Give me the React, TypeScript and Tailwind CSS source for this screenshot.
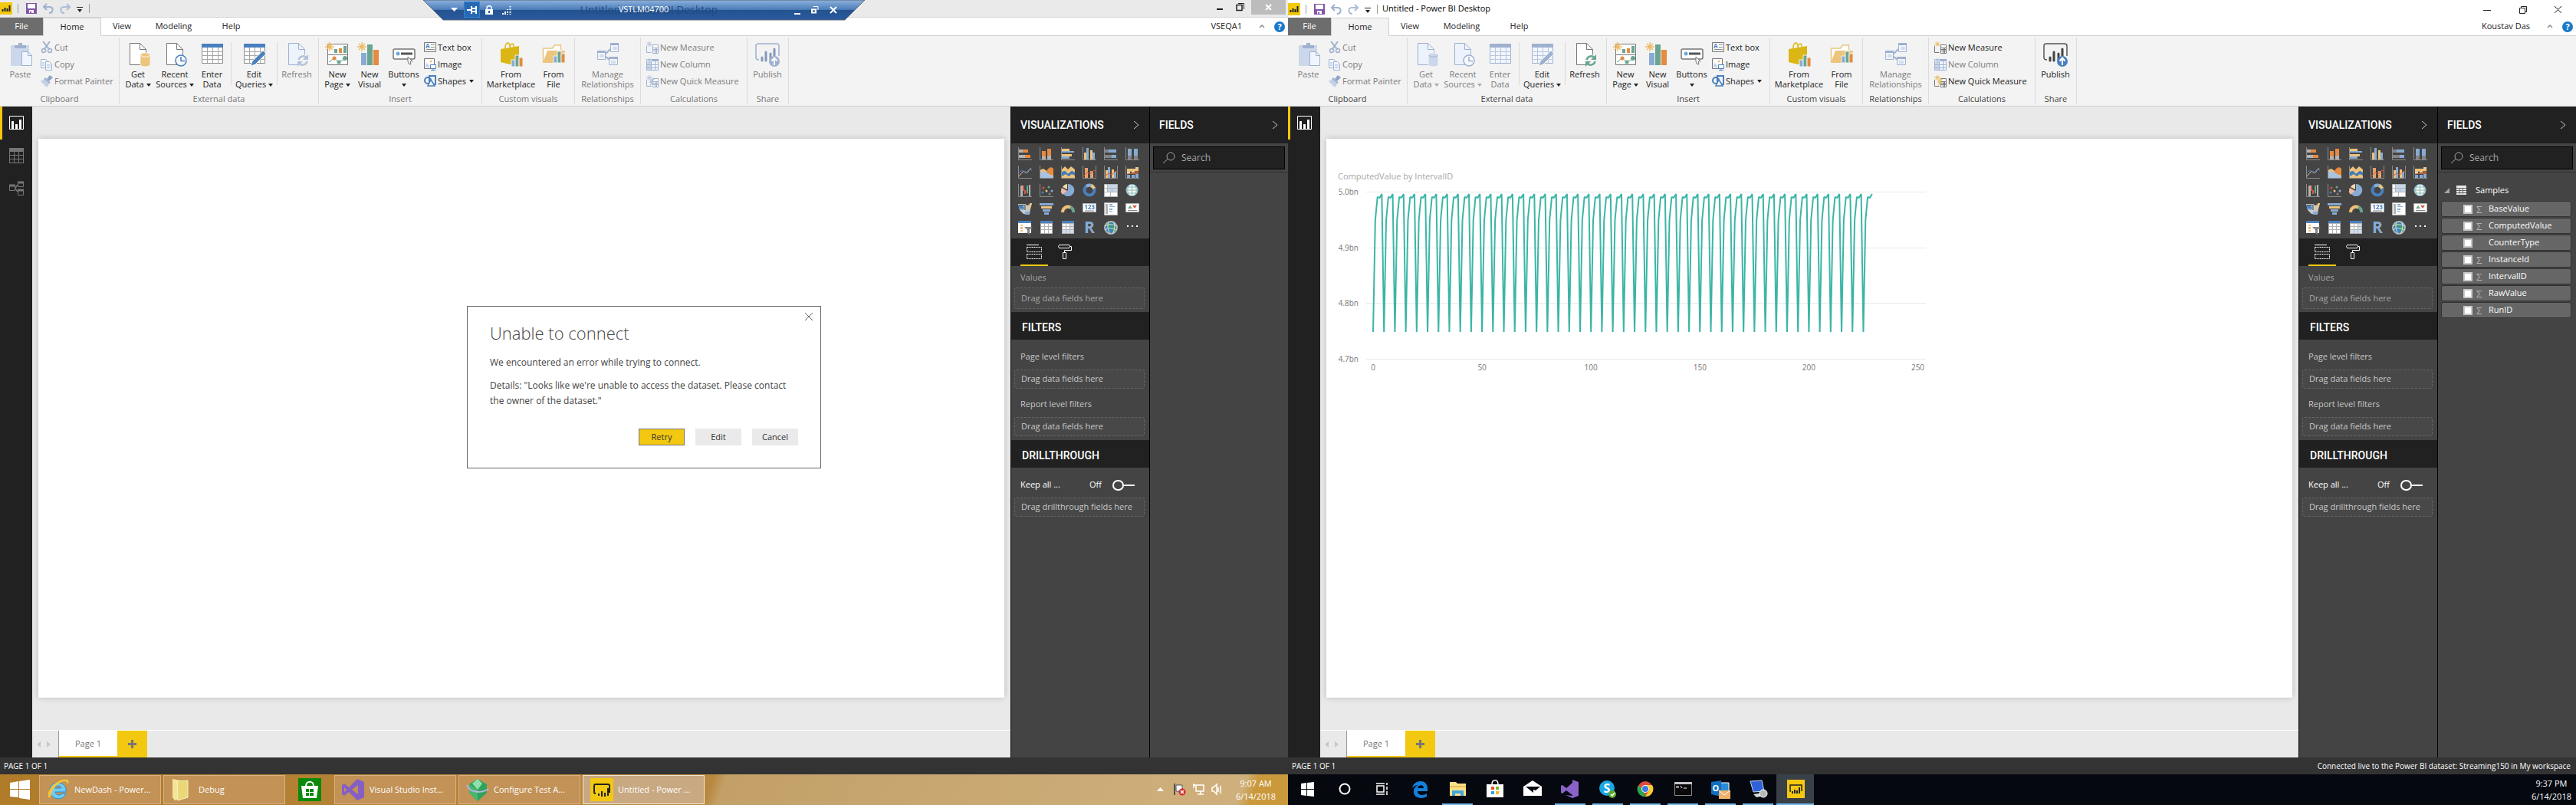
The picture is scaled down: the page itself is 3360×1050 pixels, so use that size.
import type { ReactNode } from "react";

type Tint = { dim?: boolean };

const vizIcons: { name: string; art: ReactNode }[] = [
  {
    name: "Stacked bar chart",
    art: (
      <>
        <path d="M.5 0v16.500h17.500" stroke="#8a8a8a" fill="none" />
        <path d="M1 3h5v4H1zM1 10h8v4H1z" fill="#b3b3b3" />
        <path d="M6 3h7v4H6zM9 10h7v4H9z" fill="#e58a3f" />
      </>
    ),
  },
  {
    name: "Stacked column chart",
    art: (
      <>
        <path d="M.5 0v16.500h17.500" stroke="#8a8a8a" fill="none" />
        <path d="M3 5h5v7H3zM10 2h5v9h-5z" fill="#e58a3f" />
        <path d="M3 12h5v4H3zM10 11h5v5h-5z" fill="#b3b3b3" />
      </>
    ),
  },
  {
    name: "Clustered bar chart",
    art: (
      <>
        <path d="M.5 0v16.500h17.500" stroke="#8a8a8a" fill="none" />
        <path d="M1 2h10v3H1zM1 9h13v3H1z" fill="#edc37b" />
        <path d="M1 5h16v2H1zM1 12h10v3H1z" fill="#88abd4" />
      </>
    ),
  },
  {
    name: "Clustered column chart",
    art: (
      <>
        <path d="M.5 0v16.500h17.500" stroke="#8a8a8a" fill="none" />
        <path d="M2 7h3v9H2zM10 4h3v12h-3z" fill="#edc37b" />
        <path d="M5 1h3v15H5zM13 7h3v9h-3z" fill="#88abd4" />
      </>
    ),
  },
  {
    name: "100% stacked bar chart",
    art: (
      <>
        <path d="M.5 0v16.500h17.500" stroke="#8a8a8a" fill="none" />
        <path d="M1 3h5v4H1zM1 10h9v4H1z" fill="#858585" />
        <path d="M6 3h10v4H6zM10 10h6v4h-6z" fill="#88abd4" />
      </>
    ),
  },
  {
    name: "100% stacked column chart",
    art: (
      <>
        <path d="M.5 0v16.500h17.500" stroke="#8a8a8a" fill="none" />
        <path d="M3 2h5v9H3zM11 2h5v9h-5z" fill="#88abd4" />
        <path d="M3 11h5v5H3zM11 11h5v5h-5z" fill="#858585" />
      </>
    ),
  },
  {
    name: "Line chart",
    art: (
      <>
        <path d="M.5 0v16.500h17.500" stroke="#8a8a8a" fill="none" />
        <path d="M1 14l6-7 4 3 6-7" stroke="#f0b8a8" fill="none" />
        <path d="M1 9l4-3 5 4 4-5 4 1" stroke="#4a80bd" fill="none" />
      </>
    ),
  },
  {
    name: "Area chart",
    art: (
      <>
        <path d="M.5 0v16.500h17.500" stroke="#8a8a8a" fill="none" />
        <path d="M1 6c3-3 5-2 8 1l9 4v5H1z" fill="#edc37b" />
        <path d="M9 7c3-5 6-6 9-3v9l-9-3z" fill="#e58a3f" />
        <path d="M1 9l4-2 6 3 7 4v2H1z" fill="#a9c3e2" />
      </>
    ),
  },
  {
    name: "Stacked area chart",
    art: (
      <>
        <path d="M.5 0v16.500h18" stroke="#8a8a8a" fill="none" />
        <path d="M1 5l4-4 4 4 4-4 5 4v4l-4-2-5 4-4-4-4 2z" fill="#edc37b" />
        <path d="M1 8l4-1 4 4 5-4 4 2v4l-4-2-4 3-4-3-5 3z" fill="#3f7fc4" />
        <path d="M1 14l5-3 4 3 4-3 4 2v3H1z" fill="#edc37b" />
      </>
    ),
  },
  {
    name: "Line and stacked column chart",
    art: (
      <>
        <path d="M.5 0v16.500h17V0" stroke="#8a8a8a" fill="none" />
        <path d="M3 3h4v13H3zM10 7h4v9h-4z" fill="#e9a26a" />
        <path d="M1 14l5-5 4 2 5-5 3 2" stroke="#d8573c" fill="none" />
      </>
    ),
  },
  {
    name: "Line and clustered column chart",
    art: (
      <>
        <path d="M.5 0v16.500h17V0" stroke="#8a8a8a" fill="none" />
        <path d="M2 6h3v10H2zM10 5h3v11h-3z" fill="#edc37b" />
        <path d="M5 2h3v14H5zM13 8h3v8h-3z" fill="#88abd4" />
        <path d="M1 14l5-4 4 2 5-5 3 1" stroke="#d8573c" fill="none" />
      </>
    ),
  },
  {
    name: "Ribbon chart",
    art: (
      <>
        <path d="M.5 0v16.500h17.500" stroke="#8a8a8a" fill="none" />
        <path d="M2 7h4v4H2zM8 6h4v4H8zM13 2h4v5h-4z" fill="#f0c7a0" />
        <path d="M2 4h15v3L2 8z" fill="#edc37b" />
        <path d="M2 11l15-4v4H2z" fill="#b1633b" />
        <path d="M2 12h4v4H2zM8 12h4v4H8zM13 11h4v5h-4z" fill="#88abd4" />
      </>
    ),
  },
  {
    name: "Waterfall chart",
    art: (
      <>
        <path d="M.5 0v16.500h17.500" stroke="#8a8a8a" fill="none" />
        <path d="M3 2h3v14H3zM14 1h2v15h-2z" fill="#b3b3b3" />
        <path d="M6 2h2v7H6zM8 8h2v5H8z" fill="#d8573c" />
        <path d="M11 2h2v10h-2z" fill="#6aa58f" />
      </>
    ),
  },
  {
    name: "Scatter chart",
    art: (
      <>
        <path d="M.5 0v16.500h17.500" stroke="#8a8a8a" fill="none" />
        <circle cx="5" cy="5" r="1.500" fill="#d8573c" />
        <circle cx="12" cy="4" r="1.500" fill="#6aa58f" />
        <circle cx="9" cy="9" r="1.500" fill="#edc37b" />
        <circle cx="16" cy="9" r="1.500" fill="#88abd4" />
        <circle cx="4" cy="11" r="1.500" fill="#4a80bd" />
        <circle cx="13" cy="13" r="1.500" fill="#858585" />
      </>
    ),
  },
  {
    name: "Pie chart",
    art: (
      <>
        <path d="M9 8V0a8 8 0 1 1-6 13z" fill="#88abd4" />
        <path d="M8 7V0a8 8 0 0 0-6 4z" fill="#f3d9ab" />
        <path d="M8 9L2 14A8 8 0 0 1 1 5z" fill="#efb9a9" />
      </>
    ),
  },
  {
    name: "Donut chart",
    art: (
      <>
        <circle cx="9" cy="8" r="6.500" stroke="#4a80bd" strokeWidth="4" fill="none" />
        <path d="M11 2a6.500 6.500 0 0 1 4 4" stroke="#edc37b" strokeWidth="4" fill="none" />
        <path d="M5 3a6.500 6.500 0 0 1 6-1" stroke="#88abd4" strokeWidth="4" fill="none" />
      </>
    ),
  },
  {
    name: "Treemap",
    art: (
      <>
        <path d="M0 0h18v17H0z" fill="#b3b3b3" />
        <path d="M1 1h3v4H1zM1 6h3v4H1zM1 11h7v5H1zM9 11h8v5H9z" fill="#fff" />
        <path d="M5 1h12v4H5zM5 6h5v4H5zM11 6h6v4h-6z" fill="#c5d6ec" />
      </>
    ),
  },
  {
    name: "Map",
    art: (
      <>
        <circle cx="8.500" cy="8" r="7.500" fill="#fff" stroke="#88abd4" />
        <path d="M.5 8h16M2 4h13M2 12h13M8.500 0v16M5 1c-3 5-3 9 0 14M12 1c3 5 3 9 0 14" stroke="#7db5a4" fill="none" />
      </>
    ),
  },
  {
    name: "Filled map",
    art: (
      <>
        <path d="M0 2h9l3 2 6-3-2 7-1 8-8-1-5-5z" fill="#c9c9c9" />
        <path d="M3 6h5v4H2zM9 12h6v4H9z" fill="#88abd4" />
        <path d="M0 4h6l2 4H2z" fill="#4a80bd" />
        <path d="M15 1h3l-2 8h-2z" fill="#edc37b" />
        <path d="M1 3.500h8M9 4v6" stroke="#444" />
      </>
    ),
  },
  {
    name: "Funnel chart",
    art: (
      <>
        <path d="M0 1h18v3H0zM4 9h10v3H4z" fill="#88abd4" />
        <path d="M2 5h14v3H2z" fill="#edc37b" />
        <path d="M6 13h6v3H6z" fill="#88abd4" />
      </>
    ),
  },
  {
    name: "Gauge",
    art: (
      <>
        <path d="M2 13a7 7 0 0 1 11-6" stroke="#edc37b" strokeWidth="4" fill="none" />
        <path d="M12 6a7 7 0 0 1 4 7" stroke="#6aa58f" strokeWidth="4" fill="none" />
        <path d="M8 13l5-5-3 5z" fill="#2b2b2b" />
      </>
    ),
  },
  {
    name: "Card",
    art: (
      <>
        <path d="M.5 1.500h17v11H.5z" fill="#fff" stroke="#b3b3b3" />
        <text x="9" y="9" textAnchor="middle" fontSize="8" fontWeight="700" fill="#4a80bd">123</text>
        <path d="M3 11h12" stroke="#858585" />
      </>
    ),
  },
  {
    name: "Multi-row card",
    art: (
      <>
        <path d="M.5 .5h17v16H.5z" fill="#fff" stroke="#b3b3b3" />
        <path d="M2 2h3v13H2z" fill="#b3b3b3" />
        <path d="M7 3h4M7 9h4" stroke="#88abd4" strokeWidth="2" />
        <path d="M7 5.500h7M7 11.500h4" stroke="#88abd4" />
      </>
    ),
  },
  {
    name: "KPI",
    art: (
      <>
        <path d="M.5 1.500h17v11H.5z" fill="#fff" stroke="#b3b3b3" />
        <path d="M3 8l3-4 3 4z" fill="#6aa58f" />
        <path d="M9 4h6l-3 4z" fill="#d8573c" />
        <path d="M3 10.500h12" stroke="#858585" />
      </>
    ),
  },
  {
    name: "Slicer",
    art: (
      <>
        <path d="M0 0h17v16H0z" fill="#fff" />
        <path d="M0 0h17v3H0z" fill="#4a80bd" />
        <path d="M3 5h3v2H3zM3 12h3v2H3z" fill="#edc37b" />
        <path d="M3 8h3v3H3z" fill="#efb07a" />
        <path d="M8 8h11l-4 4v6l-3-2v-4z" fill="#858585" />
      </>
    ),
  },
  {
    name: "Table",
    art: (
      <>
        <path d="M1 0h16v17H1z" fill="#b3b3b3" />
        <path d="M1 0h16v3H1z" fill="#4a80bd" />
        <path d="M2 4h4v3H2zM7 4h4v3H7zM12 4h4v3h-4zM2 8h4v3H2zM7 8h4v3H7zM12 8h4v3h-4zM2 12h4v4H2zM7 12h4v4H7zM12 12h4v4h-4z" fill="#fff" />
      </>
    ),
  },
  {
    name: "Matrix",
    art: (
      <>
        <path d="M1 0h16v17H1z" fill="#b3b3b3" />
        <path d="M1 0h16v3H1z" fill="#4a80bd" />
        <path d="M2 4h4v3H2zM7 4h4v3H7zM2 8h4v3H2zM7 8h4v3H7z" fill="#fff" />
        <path d="M12 4h4v3h-4zM12 8h4v3h-4zM2 12h4v4H2zM7 12h4v4H7zM12 12h4v4h-4z" fill="#d2dff0" />
      </>
    ),
  },
  {
    name: "R script visual",
    art: <text x="9" y="16" textAnchor="middle" fontSize="21" fontWeight="700" fill="#88abd4">R</text>,
  },
  {
    name: "ArcGIS map",
    art: (
      <>
        <circle cx="9" cy="9" r="8" fill="#3c85b5" stroke="#b3b3b3" strokeWidth="2" />
        <path d="M3 5l5-2 2 3-4 3zM10 8l5-2 1 5-4 4z" fill="#3da15c" />
        <path d="M1 7c5-3 10-3 16 0M1 12c5-3 10-3 15 0M6 1C4 7 5 12 8 17M12 1c3 5 2 11-1 16" stroke="#e0e0e0" fill="none" />
      </>
    ),
  },
  {
    name: "More visuals",
    art: <path d="M2 6h2v2H2zM8 6h2v2H8zM14 6h2v2h-2z" fill="#fff" />,
  },
];

const fields = [
  { name: "BaseValue", numeric: true },
  { name: "ComputedValue", numeric: true },
  { name: "CounterType", numeric: false },
  { name: "InstanceId", numeric: true },
  { name: "IntervalID", numeric: true },
  { name: "RawValue", numeric: true },
  { name: "RunID", numeric: true },
];

function Caret({ dim }: Tint) {
  return (
    <svg width="6" height="4" viewBox="0 0 6 4" className="inline-block align-middle">
      <path d="M0 0h6L3 4z" fill={dim ? "#a8a8a8" : "#222"} />
    </svg>
  );
}

/* ---------- ribbon icons, 32 x 32 ---------- */

function PasteIcon() {
  return (
    <>
      <path d="M3 4h24v27H3z" fill="#cbd7ea" />
      <path d="M8 4h5V1h5v3h5v4H8z" fill="#9fb1cf" />
      <path d="M17.500 12.500h8l5 5v13h-13z" fill="#f1f6fe" stroke="#9fb1cf" />
      <path d="M25.500 12.500v5h5" fill="none" stroke="#9fb1cf" />
    </>
  );
}

function PageShape({ dim }: Tint) {
  const c = dim ? "#9fb1cf" : "#767676";
  return (
    <>
      <path d="M5.500 1.500h13l8 8v20h-21z" fill={dim ? "#edf3fd" : "#fff"} stroke={c} />
      <path d="M18.500 1.500v8h8" fill="none" stroke={c} />
    </>
  );
}

function GetDataIcon({ dim }: Tint) {
  return (
    <>
      <PageShape dim={dim} />
      <path d="M19 17c0-4 13-4 13 0v12c0 4-13 4-13 0z" fill={dim ? "#cbd7ea" : "#ecc57c"} stroke="#f3f3f3" />
      <path d="M20 17c0 3 11 3 11 0" fill="none" stroke={dim ? "#9fb1cf" : "#fff"} />
    </>
  );
}

function RecentIcon({ dim }: Tint) {
  const c = dim ? "#9fb1cf" : "#4a80bd";
  return (
    <>
      <PageShape dim={dim} />
      <circle cx="24" cy="24" r="7" fill="#f6f9fe" stroke={c} strokeWidth="1.500" />
      <path d="M24 19v5.500h5" fill="none" stroke={c} strokeWidth="1.500" />
    </>
  );
}

function TableIcon({ dim }: Tint) {
  const c = dim ? "#9fb1cf" : "#8a8a8a";
  return (
    <>
      <path d="M2.500 2.500h27v25h-27z" fill={dim ? "#f1f6fe" : "#fff"} stroke={c} />
      <path d="M2 2h28v5H2z" fill={dim ? "#9fb1cf" : "#4a80bd"} />
      <path d="M2 12.500h28M2 17.500h28M2 22.500h28M9.500 7v20M16.500 7v20M23.500 7v20" stroke={dim ? "#b8c6dd" : "#a6a6a6"} />
    </>
  );
}

function EditQueriesIcon({ dim }: Tint) {
  const c = dim ? "#9fb1cf" : "#4a80bd";
  return (
    <>
      <TableIcon dim={dim} />
      <path d="M11 31l2-6 14-14 4 4-14 14z" fill={c} stroke="#f3f3f3" />
    </>
  );
}

function RefreshIcon({ dim }: Tint) {
  const c = dim ? "#b3c2db" : "#6aa58f";
  return (
    <>
      <PageShape dim={dim} />
      <circle cx="24" cy="24" r="8" fill="#f3f3f3" />
      <path d="M18.500 23a6 6 0 0 1 10-3M29.500 25a6 6 0 0 1-10 3" fill="none" stroke={c} strokeWidth="2.500" />
      <path d="M31 16v7h-7zM17 32v-7h7z" fill={c} />
    </>
  );
}

function Sparkle({ dim }: Tint) {
  return (
    <path
      d="M6 0v12M0 6h12M2 2l8 8M10 2l-8 8"
      stroke={dim ? "#b8c6dd" : "#edbb66"}
      strokeWidth="1.500"
      fill="none"
    />
  );
}

function NewPageIcon() {
  return (
    <>
      <path d="M3.500 2.500h26v27h-26zM3 16.500h27" fill="#fff" stroke="#767676" />
      <path d="M12 9h4v5h-4zM24 5h4v9h-4z" fill="#6aa58f" />
      <path d="M18 8h4v6h-4z" fill="#e58a3f" />
      <path d="M5 26l7-5 6 5 9-5" fill="none" stroke="#6aa58f" />
      <circle cx="12" cy="21" r="2.500" fill="#e58a3f" />
      <circle cx="18" cy="26" r="2.500" fill="#6aa58f" />
      <circle cx="26" cy="21" r="3" fill="#6aa58f" />
      <Sparkle />
    </>
  );
}

function NewVisualIcon() {
  return (
    <>
      <path d="M5 14h7v16H5z" fill="#88abd4" />
      <path d="M13 3h7v27h-7z" fill="#6aa58f" />
      <path d="M21 10h7v20h-7z" fill="#e58a3f" />
      <Sparkle />
    </>
  );
}

function ButtonsIcon() {
  return (
    <>
      <rect x="2" y="9" width="28" height="13" rx="2" fill="#fff" stroke="#767676" strokeWidth="1.500" />
      <circle cx="8" cy="15" r="2.500" fill="#6ea7d8" />
      <path d="M12 15h15" stroke="#555" strokeWidth="3" />
      <path d="M21 19l6 6h-3l1 4-3-1-1-3z" fill="#fff" stroke="#767676" />
    </>
  );
}

function SmallBars() {
  return (
    <>
      <path d="M16 23h5v9h-5z" fill="#88abd4" stroke="#f3f3f3" />
      <path d="M21 17h5v15h-5z" fill="#6aa58f" stroke="#f3f3f3" />
      <path d="M26 20h5v12h-5z" fill="#e58a3f" stroke="#f3f3f3" />
    </>
  );
}

function MarketIcon() {
  return (
    <>
      <path d="M8 8c0-9 6-9 6-2M14 8c0-8 6-7 5-2" fill="none" stroke="#dcb614" strokeWidth="1.500" />
      <path d="M2 9l24-4v19l-12 5-12-3z" fill="#dcb614" />
      <SmallBars />
    </>
  );
}

function FileIcon() {
  return (
    <>
      <path d="M2.500 26V8h12l3-4h8v6" fill="#fff" stroke="#ecc57c" strokeWidth="1.500" />
      <path d="M2 27L8 11h23l-4 16z" fill="#ecc57c" />
      <g transform="translate(0 -5)">
        <SmallBars />
      </g>
    </>
  );
}

function RelationsIcon() {
  return (
    <>
      <path d="M12 16l7-7M12 18l7 6" stroke="#9fb1cf" strokeWidth="2" />
      <path d="M19.500 1.500h10v11h-10zM2.500 11.500h10v11h-10zM17.500 19.500h11v10h-11z" fill="#f1f6fe" stroke="#9fb1cf" />
      <path d="M19 1h11v3H19zM2 11h11v3H2zM17 19h12v3H17z" fill="#9fb1cf" />
      <path d="M22 7h6M22 9h6M5 17h6M5 19h6M20 25h6M20 27h6" stroke="#b8c6dd" />
    </>
  );
}

function PublishIcon({ dim }: Tint) {
  const c = dim ? "#9fb1cf" : "#555";
  return (
    <>
      <path d="M5 23c-3 0-4-1-4-3V5c0-2 1-3 3-3h24c2 0 3 1 3 3v13" fill="none" stroke={c} strokeWidth="1.500" />
      <path d="M9 24v-4M14 24V13M20 22v-7M25 18V9" stroke={dim ? "#8598bb" : "#444"} strokeWidth="3" strokeLinecap="round" />
      <circle cx="25" cy="25" r="7" fill={dim ? "#9fb1cf" : "#4a80bd"} />
      <path d="M25 30v-9M21.500 24.500l3.500-4 3.500 4" fill="none" stroke="#fff" strokeWidth="2" />
    </>
  );
}

/* ---------- ribbon icons, 16 x 16 ---------- */

function CutIcon() {
  return (
    <>
      <path d="M3 0l8 10M12 0L5 10" stroke="#9fb1cf" strokeWidth="2" />
      <circle cx="4" cy="12" r="2.500" fill="none" stroke="#9fb1cf" strokeWidth="1.500" />
      <circle cx="12" cy="12" r="2.500" fill="none" stroke="#9fb1cf" strokeWidth="1.500" />
    </>
  );
}

function CopyIcon() {
  return (
    <>
      <path d="M.5 1.500h6l3 3v8h-9z" fill="#f1f6fe" stroke="#9fb1cf" />
      <path d="M6.500 4.500h5l3 3v8h-8z" fill="#f1f6fe" stroke="#9fb1cf" />
      <path d="M2 6h3M2 9h3M8 9h5M8 12h5" stroke="#9fb1cf" />
    </>
  );
}

function PainterIcon() {
  return (
    <>
      <path d="M12 0l4 3-5 5-3-3z" fill="#8fa5c8" />
      <path d="M6 3l7 7-2 1-7-6z" fill="#9fb1cf" />
      <path d="M0 8l5-3 6 7-3 4z" fill="#c3d0e6" />
    </>
  );
}

function TextBoxIcon() {
  return (
    <>
      <path d="M.5 1.500h15v12H.5z" fill="#fff" stroke="#767676" />
      <text x="2" y="9" fontSize="8" fontWeight="700" fill="#4a80bd">A</text>
      <path d="M9 4.500h5M9 7.500h5M3 10.500h11" stroke="#8a8a8a" />
    </>
  );
}

function ImageIcon() {
  return (
    <>
      <path d="M.5 .5h13v13H.5z" fill="#fff" stroke="#767676" />
      <path d="M2 12V8l2-2 3 4v2z" fill="#c5d6ec" />
      <circle cx="9" cy="4" r="1.500" fill="#ecc57c" />
      <path d="M8.500 8.500h7v5h-7z" fill="#fff" stroke="#4a80bd" />
      <path d="M12 13v3M9 15.500h6" stroke="#4a80bd" />
    </>
  );
}

function ShapesIcon() {
  return (
    <>
      <circle cx="5" cy="7" r="4" fill="none" stroke="#4a80bd" strokeWidth="2" />
      <path d="M7 1h8v11H7z" fill="none" stroke="#4a80bd" strokeWidth="2" />
      <path d="M9 6l5 8H5z" fill="#f3f3f3" stroke="#4a80bd" strokeWidth="1.500" />
    </>
  );
}

function MeasureIcon({ dim, quick }: Tint & { quick?: boolean }) {
  const c = dim ? "#9fb1cf" : "#767676";
  return (
    <>
      <path d="M.5 6v8.500h6" fill="none" stroke={c} />
      <path d="M8.500 4.500h7v11h-7zM9 8.500h6M9 10.500h6M9 12.500h6M11.500 9v6M13.500 9v6" fill="#fff" stroke={c} />
      <path d="M4 0v7M0 3.500h8M1.500 1l5 5M6.500 1l-5 5" stroke={dim ? "#b8c6dd" : "#edbb66"} />
      {quick && <path d="M6 5h5l-3 4h2l-6 6 2-5H4z" fill={dim ? "#b8c6dd" : "#ecc57c"} />}
    </>
  );
}

function ColumnIcon() {
  return (
    <>
      <path d="M.5 1.500h15v14H.5z" fill="#f1f6fe" stroke="#9fb1cf" />
      <path d="M7 1h9v3H7z" fill="#9fb1cf" />
      <path d="M1 5h5v10H1z" fill="#cbd7ea" />
      <path d="M6.500 4v11M11.500 4v11M1 8.500h14M1 12.500h14" stroke="#9fb1cf" />
      <path d="M4 0v7M0 3.500h8M1.500 1l5 5M6.500 1l-5 5" stroke="#b8c6dd" />
    </>
  );
}

/* ---------- ribbon parts ---------- */

type BigProps = { icon: ReactNode; lines: string[]; width: string; dim?: boolean; menu?: boolean };

function BigButton({ icon, lines, width, dim, menu }: BigProps) {
  return (
    <button disabled={dim} className={`flex shrink-0 flex-col items-center whitespace-nowrap ${width} ${dim ? "text-[#7b7b7b]" : "text-[#222]"}`}>
      <svg width="32" height="32" viewBox="0 0 32 32">{icon}</svg>
      <span className="mt-[3px] block text-[11px] leading-[13px]">{lines[0]}</span>
      <span className="block text-[11px] leading-[13px]">
        {lines[1]} {menu && <Caret dim={dim} />}
      </span>
    </button>
  );
}

function SmallButton({ icon, label, dim, menu }: { icon: ReactNode; label: string; dim?: boolean; menu?: boolean }) {
  return (
    <button disabled={dim} className={`flex h-[22px] items-center gap-[2px] text-[11px] whitespace-nowrap ${dim ? "text-[#7b7b7b]" : "text-[#222]"}`}>
      <svg width="16" height="16" viewBox="0 0 16 16">{icon}</svg>
      {label}
      {menu && <span className="ml-[2px] flex"><Caret /></span>}
    </button>
  );
}

function Group({ label, width, live, children }: { label: string; width: string; live: boolean; children: ReactNode }) {
  return (
    <div className={`mt-[2px] flex h-[87px] shrink-0 flex-col border-r border-[#dcdcdc] pt-[6px] ${width}`}>
      <div className="flex h-[67px] shrink-0">{children}</div>
      <div className={`text-center text-[11px] leading-[14px] ${live ? "text-[#444]" : "text-[#777]"}`}>{label}</div>
    </div>
  );
}

function Rule() {
  return <div className="h-[56px] w-px shrink-0 bg-[#d9d9d9]" />;
}

function Ribbon({ live }: { live: boolean }) {
  return (
    <div className="flex h-[92px] border-b border-[#cfcfcf] bg-[#f3f3f3]">
      <Group label="Clipboard" width="w-[156px]" live={live}>
        <BigButton icon={<PasteIcon />} lines={["Paste"]} width="w-[53px]" dim />
        <div className="-mt-1">
          <SmallButton icon={<CutIcon />} label="Cut" dim />
          <SmallButton icon={<CopyIcon />} label="Copy" dim />
          <SmallButton icon={<PainterIcon />} label="Format Painter" dim />
        </div>
      </Group>
      <Group label="External data" width="w-[260px]" live={live}>
        <BigButton icon={<GetDataIcon dim={live} />} lines={["Get", "Data"]} width="w-12" dim={live} menu />
        <BigButton icon={<RecentIcon dim={live} />} lines={["Recent", "Sources"]} width="w-12" dim={live} menu />
        <BigButton icon={<TableIcon dim={live} />} lines={["Enter", "Data"]} width="w-[49px]" dim={live} />
        <Rule />
        <BigButton icon={<EditQueriesIcon dim={live} />} lines={["Edit", "Queries"]} width="w-[59px]" menu />
        <Rule />
        <BigButton icon={<RefreshIcon dim={!live} />} lines={["Refresh"]} width="w-[50px]" dim={!live} />
      </Group>
      <Group label="Insert" width="w-[213px]" live={live}>
        <BigButton icon={<NewPageIcon />} lines={["New", "Page"]} width="w-12" menu />
        <BigButton icon={<NewVisualIcon />} lines={["New", "Visual"]} width="w-9" />
        <BigButton icon={<ButtonsIcon />} lines={["Buttons", ""]} width="w-[53px]" menu />
        <div className="-mt-1">
          <SmallButton icon={<TextBoxIcon />} label="Text box" />
          <SmallButton icon={<ImageIcon />} label="Image" />
          <SmallButton icon={<ShapesIcon />} label="Shapes" menu />
        </div>
      </Group>
      <Group label="Custom visuals" width="w-[121px]" live={live}>
        <BigButton icon={<MarketIcon />} lines={["From", "Marketplace"]} width="w-[75px]" />
        <BigButton icon={<FileIcon />} lines={["From", "File"]} width="w-9" />
      </Group>
      <Group label="Relationships" width="w-[86px]" live={live}>
        <BigButton icon={<RelationsIcon />} lines={["Manage", "Relationships"]} width="w-[85px]" dim />
      </Group>
      <Group label="Calculations" width="w-[139px]" live={live}>
        <div className="-mt-1 pl-[7px]">
          <SmallButton icon={<MeasureIcon dim={!live} />} label="New Measure" dim={!live} />
          <SmallButton icon={<ColumnIcon />} label="New Column" dim />
          <SmallButton icon={<MeasureIcon dim={!live} quick />} label="New Quick Measure" dim={!live} />
        </div>
      </Group>
      <Group label="Share" width="w-[54px]" live={live}>
        <BigButton icon={<PublishIcon dim={!live} />} lines={["Publish"]} width="w-[52px]" dim={!live} />
      </Group>
    </div>
  );
}

function Logo({ size }: { size: number }) {
  return (
    <svg width={size} height={size} viewBox="0 0 16 16" className="shrink-0">
      <path d="M0 0h16v16H0z" fill="#f2c811" />
      <path d="M3.500 12V9M6.500 12V7M9.500 12V8M12.500 12V4" stroke="#222" strokeWidth="2" />
    </svg>
  );
}

function QuickAccess() {
  return (
    <div className="flex items-center">
      <Logo size={16} />
      <span className="ml-[7px] h-3 w-px bg-[#999]" />
      <button aria-label="Save" className="ml-[10px]">
        <svg width="14" height="14" viewBox="0 0 14 14">
          <path d="M0 0h14v14H0z" fill="#8455a8" />
          <path d="M2 1h10v6H2zM4 9h6v4H4z" fill="#fff" />
          <path d="M5 11h2v2H5z" fill="#8455a8" />
        </svg>
      </button>
      <button aria-label="Undo" className="ml-2">
        <svg width="14" height="14" viewBox="0 0 14 14">
          <path d="M1 5h8c5 0 5 8-1 8M5 1L1 5l4 4" fill="none" stroke="#9fb1cf" strokeWidth="2" />
        </svg>
      </button>
      <button aria-label="Redo" className="ml-2">
        <svg width="14" height="14" viewBox="0 0 14 14">
          <path d="M13 5H5C0 5 0 13 6 13M9 1l4 4-4 4" fill="none" stroke="#aebdd6" strokeWidth="2" />
        </svg>
      </button>
      <button aria-label="Customize quick access" className="ml-2 mt-1">
        <svg width="8" height="8" viewBox="0 0 8 8">
          <path d="M0 0h8v1H0zM1 3h6L4 7z" fill="#222" />
        </svg>
      </button>
      <span className="ml-2 h-3 w-px bg-[#999]" />
    </div>
  );
}

function TitleBar({ live }: { live: boolean }) {
  if (!live) {
    return (
      <div className="flex h-[23px] items-center justify-between border-b border-[#d4d4d4] bg-[#eaeaea]">
        <QuickAccess />
        <div className="flex items-start self-stretch">
          <button aria-label="Minimize" className="h-5 w-[26px]">
            <svg width="26" height="20" viewBox="0 0 26 20">
              <path d="M9 12h8" stroke="#222" strokeWidth="2" />
            </svg>
          </button>
          <button aria-label="Restore" className="h-5 w-[28px]">
            <svg width="28" height="20" viewBox="0 0 28 20" fill="none" stroke="#222">
              <path d="M9 6.500h7v7H9z" strokeWidth="1.500" />
              <path d="M11 4.500h7.500V12" />
            </svg>
          </button>
          <button aria-label="Close" className="mr-[3px] h-[19px] w-[45px] bg-[#bcbcbc]">
            <svg width="45" height="19" viewBox="0 0 45 19">
              <path d="M19 6l7 7M26 6l-7 7" stroke="#fff" strokeWidth="2" />
            </svg>
          </button>
        </div>
      </div>
    );
  }
  return (
    <div className="flex h-[23px] items-center justify-between bg-white">
      <div className="flex items-center">
        <QuickAccess />
        <h1 className="ml-[6px] text-[11px] text-black">Untitled - Power BI Desktop</h1>
      </div>
      <div className="flex items-center">
        <button aria-label="Minimize" className="w-[46px]">
          <svg width="46" height="20" viewBox="0 0 46 20">
            <path d="M17 11.500h10" stroke="#222" />
          </svg>
        </button>
        <button aria-label="Restore" className="w-[46px]">
          <svg width="46" height="20" viewBox="0 0 46 20" fill="none" stroke="#222">
            <path d="M18.500 8.500h7v7h-7zM20.500 8V6.500h7v7H26" />
          </svg>
        </button>
        <button aria-label="Close" className="w-[46px]">
          <svg width="46" height="20" viewBox="0 0 46 20">
            <path d="M18 6l9 9M27 6l-9 9" stroke="#222" />
          </svg>
        </button>
      </div>
    </div>
  );
}

function TabRow({ user }: { user: string }) {
  return (
    <div className="flex h-6 justify-between border-b border-[#cfcfcf] bg-white text-[11px] text-[#222]">
      <div className="flex">
        <button className="w-14 bg-[#6d6d6d] text-white">File</button>
        <button className="-mb-px w-[76px] border border-b-0 border-[#cfcfcf] bg-[#f3f3f3]">Home</button>
        <button className="w-[54px]">View</button>
        <button className="w-[81px]">Modeling</button>
        <button className="w-[69px]">Help</button>
      </div>
      <div className="flex items-center">
        <span>{user}</span>
        <button aria-label="Collapse ribbon" className="ml-[22px]">
          <svg width="8" height="8" viewBox="0 0 8 8">
            <path d="M1 5l3-3 3 3" fill="none" stroke="#8a8a8a" strokeWidth="1.500" />
          </svg>
        </button>
        <button aria-label="Help" className="mr-1 ml-3 h-[14px] w-[14px] rounded-full bg-[#1979ca] text-[11px] leading-[14px] font-bold text-white">?</button>
      </div>
    </div>
  );
}

function ViewRail({ live }: { live: boolean }) {
  return (
    <nav className="flex w-[42px] shrink-0 flex-col bg-[#212121]">
      <button aria-label="Report" className="flex h-[43px] items-center border-l-[3px] border-[#f2c811] pl-[9px]">
        <svg width="19" height="19" viewBox="0 0 19 19">
          <path d="M.5 .5h18v17H.5z" fill="none" stroke="#fff" />
          <path d="M4.500 17V7M9.500 17v-6M14.500 17V5" stroke="#fff" strokeWidth="3" />
        </svg>
      </button>
      {!live && (
        <>
          <button aria-label="Data" className="flex h-[42px] items-center pl-3">
            <svg width="19" height="20" viewBox="0 0 19 20">
              <path d="M0 0h19v20H0z" fill="#767676" />
              <path d="M1 5h5v4H1zM7 5h5v4H7zM13 5h5v4h-5zM1 10h5v4H1zM7 10h5v4H7zM13 10h5v4h-5zM1 15h5v4H1zM7 15h5v4H7zM13 15h5v4h-5z" fill="#212121" />
            </svg>
          </button>
          <button aria-label="Relationships" className="flex h-[42px] items-center pl-3">
            <svg width="19" height="19" viewBox="0 0 19 19" fill="none" stroke="#767676">
              <path d="M.5 6.500h7v6h-7zM11.500 1.500h7v6h-7zM11.500 11.500h7v7h-7z" />
              <path d="M0 6h8M11 2h8M11 12h8" strokeWidth="3" />
              <path d="M8 9l3-4M8 10l3 4" strokeWidth="1.500" />
            </svg>
          </button>
        </>
      )}
    </nav>
  );
}

/* ---------- chart ---------- */

const yTicks = [
  { label: "5.0bn", y: 20 },
  { label: "4.9bn", y: 93 },
  { label: "4.8bn", y: 165 },
  { label: "4.7bn", y: 238 },
];
const xTicks = [0, 50, 100, 150, 200, 250];
const cycle = [203, 57, 27, 28, 23]; // every run restarts after five intervals

function xAt(interval: number) {
  return 46 + interval * 2.842;
}

function LineChart() {
  const points = Array.from({ length: 230 }, (_, i) => `${xAt(i)},${cycle[i % 5]}`).join(" ");
  return (
    <figure className="pt-[41px] pl-[15px]">
      <figcaption className="text-[11px] leading-4 text-[#a6a6a6]">ComputedValue by IntervalID</figcaption>
      <svg width="790" height="262" viewBox="0 0 790 262" className="-mt-2 block" fontSize="10" fill="#777">
        {yTicks.map((t) => (
          <g key={t.label}>
            <path d={`M37 ${t.y}.5h730`} stroke="#eaeaea" />
            <text x="27" y={t.y + 4} textAnchor="end">{t.label}</text>
          </g>
        ))}
        {xTicks.map((t) => (
          <text key={t} x={xAt(t)} y="253" textAnchor="middle">{t}</text>
        ))}
        <polyline points={points} fill="none" stroke="#3bb5a6" strokeWidth="2" strokeLinejoin="bevel" />
      </svg>
    </figure>
  );
}

/* ---------- side panes ---------- */

function Chevron() {
  return (
    <svg width="8" height="12" viewBox="0 0 8 12">
      <path d="M1 1l6 5-6 5" fill="none" stroke="#c8c8c8" />
    </svg>
  );
}

function DropZone({ text, size = "h-[25px]" }: { text: string; size?: string }) {
  return (
    <div className={`mr-[6px] ml-1 flex items-center rounded-[3px] border border-dashed border-[#646464] bg-[#484848] pl-2 text-[11px] whitespace-nowrap ${size}`}>
      {text}
    </div>
  );
}

function Visualizations() {
  return (
    <section className="w-[181px] shrink-0 border-l border-black bg-[#444] text-[11px] text-[#c8c8c8]">
      <header className="flex h-12 items-center justify-between bg-[#212121] pr-[13px] pl-3">
        <h2 className="font-[Roboto] text-sm font-medium text-white">VISUALIZATIONS</h2>
        <button aria-label="Collapse visualizations"><Chevron /></button>
      </header>
      <div className="grid h-[124px] grid-cols-[repeat(6,28px)] content-start gap-y-[5px] pt-[5px] pl-[9px]">
        {vizIcons.map((v) => (
          <button key={v.name} aria-label={v.name} className="h-[19px]">
            <svg width="19" height="19" viewBox="0 0 19 19" className="overflow-visible">{v.art}</svg>
          </button>
        ))}
      </div>
      <div className="flex h-9 bg-[#212121] pl-3">
        <button aria-label="Fields" className="flex w-9 justify-center border-b-2 border-[#f2c811] pt-2">
          <svg width="20" height="19" viewBox="0 0 20 19" fill="none" stroke="#fff">
            <path d="M0 .5h16" />
            <path d="M.5 3.500h19v6H.5zM.5 12.500h19v6H.5z" strokeDasharray="2 1" />
          </svg>
        </button>
        <button aria-label="Format" className="ml-3 self-start pt-2">
          <svg width="20" height="20" viewBox="0 0 20 20" fill="none" stroke="#fff">
            <path d="M2.500 .5h13l1 2-1 2h-13l-1-2zM16 2.500h2.500v5h-9V10M7.500 10.500h4v8h-4z" />
          </svg>
        </button>
      </div>
      <div className="pb-1 text-[#a6a6a6]">
        <h3 className="px-3 pt-[5px] pb-[3px] leading-5">Values</h3>
        <DropZone text="Drag data fields here" size="h-7" />
      </div>
      <header className="flex h-9 items-center bg-[#212121] pt-1 pl-[14px]">
        <h2 className="font-[Roboto] text-sm font-medium text-white">FILTERS</h2>
      </header>
      <div className="pb-[5px]">
        <h3 className="px-3 pt-3 pb-[7px] leading-5">Page level filters</h3>
        <DropZone text="Drag data fields here" />
        <h3 className="px-3 pt-[10px] pb-[7px] leading-5">Report level filters</h3>
        <DropZone text="Drag data fields here" />
      </div>
      <header className="flex h-9 items-center bg-[#212121] pt-1 pl-[14px]">
        <h2 className="font-[Roboto] text-sm font-medium text-white">DRILLTHROUGH</h2>
      </header>
      <label className="flex h-[39px] items-center pt-[6px] pl-3 text-white">
        <span className="w-[90px]">Keep all ...</span>
        <span className="w-[29px]">Off</span>
        <input type="checkbox" role="switch" className="sr-only" />
        <svg width="32" height="16" viewBox="0 0 32 16" fill="none" stroke="#fff" strokeWidth="2">
          <rect x="2" y="2" width="13" height="12" rx="6" />
          <path d="M15 8h15" />
        </svg>
      </label>
      <DropZone text="Drag drillthrough fields here" />
    </section>
  );
}

function Fields({ live }: { live: boolean }) {
  return (
    <section className="w-[181px] shrink-0 border-l border-black bg-[#444] text-[11px] text-white">
      <header className="flex h-12 items-center justify-between bg-[#212121] pr-[13px] pl-3">
        <h2 className="font-[Roboto] text-sm font-medium">FIELDS</h2>
        <button aria-label="Collapse fields"><Chevron /></button>
      </header>
      <div className="border-b border-[#333] px-1 pt-1 pb-[3px]">
        <label className="flex h-[30px] items-center gap-2 border border-black bg-[#212121] pl-3">
          <svg width="16" height="16" viewBox="0 0 16 16" fill="none" stroke="#a6a6a6">
            <circle cx="10" cy="6" r="5" />
            <path d="M6 9.500L0 15" />
          </svg>
          <input type="search" aria-label="Search fields" placeholder="Search" className="w-24 bg-transparent text-xs text-white outline-none placeholder:text-[#a6a6a6]" />
        </label>
      </div>
      {live && (
        <div className="pt-[11px]">
          <div className="flex h-6 items-center pl-2">
            <svg width="7" height="7" viewBox="0 0 7 7"><path d="M7 0v7H0z" fill="#a6a6a6" /></svg>
            <svg width="13" height="12" viewBox="0 0 13 12" className="ml-[9px]">
              <path d="M0 0h13v12H0z" fill="#e8e8e8" />
              <path d="M0 3.500h13M0 6.500h13M0 9.500h13M4.500 3v8M8.500 3v8" stroke="#666" />
            </svg>
            <span className="ml-3">Samples</span>
          </div>
          <ul className="mt-[2px] ml-1 w-[170px] space-y-px">
            {fields.map((f) => (
              <li key={f.name}>
                <label className="flex h-[21px] items-center rounded-[3px] border border-[#333] bg-[#666] pl-7">
                  <input type="checkbox" className="h-3 w-3 appearance-none border-2 border-[#c8c8c8] bg-white" />
                  <span className="ml-[5px] w-[16px] text-[13px] leading-4 text-[#b3b3b3]">{f.numeric && "Σ"}</span>
                  {f.name}
                </label>
              </li>
            ))}
          </ul>
        </div>
      )}
    </section>
  );
}

function PageTabs() {
  return (
    <div className="flex h-9 border-t border-white bg-[#e9e9e9] text-[11px] text-[#777]">
      <div className="flex w-[35px] items-center gap-[8px] border-r border-[#999] pl-[6px]">
        <button aria-label="Previous page">
          <svg width="5" height="8" viewBox="0 0 5 8"><path d="M5 0v8L0 4z" fill="#c6c6c6" /></svg>
        </button>
        <button aria-label="Next page">
          <svg width="5" height="8" viewBox="0 0 5 8"><path d="M0 0v8l5-4z" fill="#c6c6c6" /></svg>
        </button>
      </div>
      <button className="w-[76px] border-b-2 border-[#f2c811] bg-white pt-[2px]">Page 1</button>
      <button aria-label="New page" className="flex w-[39px] items-center justify-center bg-[#f2c811]">
        <svg width="11" height="11" viewBox="0 0 11 11">
          <path d="M5.500 0v11M0 5.500h11" stroke="#777" strokeWidth="3" />
        </svg>
      </button>
    </div>
  );
}

function ErrorDialog() {
  return (
    <div className="absolute inset-0 flex items-center justify-center">
      <div role="dialog" aria-labelledby="dialog-title" className="w-[462px] border border-[#666] bg-white px-[29px] pt-[7px] pb-[29px] text-[#444]">
        <div className="-mr-5 flex justify-end">
          <button aria-label="Close">
            <svg width="12" height="12" viewBox="0 0 12 12">
              <path d="M1 1l10 10M11 1L1 11" stroke="#666" />
            </svg>
          </button>
        </div>
        <h2 id="dialog-title" className="text-[22px] leading-[30px] font-light">Unable to connect</h2>
        <p className="mt-[14px] text-xs leading-5">We encountered an error while trying to connect.</p>
        <p className="mt-[10px] text-xs leading-5">
          Details: "Looks like we're unable to access the dataset. Please contact
          <br />
          the owner of the dataset."
        </p>
        <div className="mt-[26px] flex justify-end gap-[14px] text-[11px] text-[#333]">
          <button className="h-[22px] w-[60px] border border-[#777] bg-[#f2c811]">Retry</button>
          <button className="h-[22px] w-[60px] bg-[#eaeaea]">Edit</button>
          <button className="h-[22px] w-[60px] bg-[#eaeaea]">Cancel</button>
        </div>
      </div>
    </div>
  );
}

// The remote session's connection bar hangs over the top of its window
function ConnectionBar() {
  return (
    <div className="absolute inset-x-0 top-0 flex justify-center">
      <div className="relative h-[27px] w-[576px]">
        <svg width="576" height="27" viewBox="0 0 576 27" className="absolute inset-0">
          <defs>
            <linearGradient id="bar" x1="0" y1="0" x2="0" y2="1">
              <stop offset="0" stopColor="#8db1de" />
              <stop offset=".48" stopColor="#4b7db8" />
              <stop offset=".5" stopColor="#25528f" />
              <stop offset="1" stopColor="#285a9e" />
            </linearGradient>
          </defs>
          <path d="M0 0h576l-26 26H26z" fill="url(#bar)" stroke="#5b6470" />
        </svg>
        <div className="relative flex h-[25px] items-center text-xs text-white">
          <button aria-label="Menu" className="ml-[36px]">
            <svg width="9" height="5" viewBox="0 0 9 5"><path d="M0 0h9L4.500 5z" fill="#fff" /></svg>
          </button>
          <button aria-label="Pin" className="ml-2 flex h-[21px] w-[21px] items-center justify-center border border-[#2f83d6] bg-[#2868b2]">
            <svg width="13" height="12" viewBox="0 0 13 12"><path d="M0 6h5M6 1v10M6 4h6M6 8h6M12 1v10" stroke="#fff" strokeWidth="2" /></svg>
          </button>
          <button aria-label="Secure connection" className="ml-[7px]">
            <svg width="10" height="12" viewBox="0 0 10 12">
              <path d="M2 6V3c0-3 6-3 6 0v3" fill="none" stroke="#fff" strokeWidth="1.500" />
              <path d="M0 5h10v7H0z" fill="#fff" />
              <path d="M5 7v3" stroke="#285a9e" strokeWidth="2" />
            </svg>
          </button>
          <button aria-label="Signal" className="ml-3">
            <svg width="12" height="12" viewBox="0 0 12 12">
              <path d="M1 12v-2M4 12V8" stroke="#fff" strokeWidth="2" />
              <path d="M7 12V5M10.500 12V0" stroke="#fff" strokeWidth="2" strokeDasharray="1 1" />
            </svg>
          </button>
          <div className="grid flex-1 place-items-center">
            <span className="col-start-1 row-start-1 mr-[10px] text-sm whitespace-nowrap text-[#1f4b82]">Untitled - Power BI Desktop</span>
            <span className="col-start-1 row-start-1 mr-6 text-[11px]">VSTLM04700</span>
          </div>
          <div className="mr-[36px] flex items-center gap-[14px]">
            <button aria-label="Minimize connection">
              <svg width="8" height="12" viewBox="0 0 8 12"><path d="M0 11h8" stroke="#fff" strokeWidth="2" /></svg>
            </button>
            <button aria-label="Restore connection">
              <svg width="10" height="12" viewBox="0 0 10 12" fill="none" stroke="#fff">
                <path d="M1 5.500h5v4H1z" strokeWidth="2" />
                <path d="M3 1.500h6V6" />
              </svg>
            </button>
            <button aria-label="Close connection">
              <svg width="10" height="10" viewBox="0 0 10 10"><path d="M1 1l8 8M9 1L1 9" stroke="#fff" strokeWidth="2" /></svg>
            </button>
          </div>
        </div>
      </div>
    </div>
  );
}

function PowerBIWindow({ live, user, status }: { live: boolean; user: string; status: string }) {
  return (
    <div className="relative flex flex-1 flex-col">
      <TitleBar live={live} />
      <TabRow user={user} />
      <Ribbon live={live} />
      <div className="flex flex-1">
        <ViewRail live={live} />
        <main className="flex min-w-0 flex-1 flex-col bg-[#e9e9e9]">
          <div className="flex flex-1 flex-col px-2 pt-[42px] pb-[42px]">
            <div className="flex-1 bg-white shadow-[0_0_8px_rgba(0,0,0,0.2)]">{live && <LineChart />}</div>
          </div>
          <PageTabs />
        </main>
        <Visualizations />
        <Fields live={live} />
      </div>
      <footer className="flex h-[22px] items-center justify-between bg-[#333] pr-[7px] pl-[5px] text-[10px] text-white">
        <span>PAGE 1 OF 1</span>
        <span>{status}</span>
      </footer>
      {!live && <ErrorDialog />}
      {!live && <ConnectionBar />}
    </div>
  );
}

/* ---------- task bars ---------- */

function StartIcon({ size }: { size: number }) {
  return (
    <svg width={size} height={size} viewBox="0 0 26 26" fill="#fff">
      <path d="M0 4l11-2v10H0zM12 2l14-2v12H12zM0 13h11v10L0 22zM12 13h14v13l-14-2z" />
    </svg>
  );
}

function VisualStudioIcon() {
  return <path d="M0 9l3-2 6 5L20 1l9 4v20l-9 4L9 18l-6 5-3-2zM3 12v6l3-3zM13 15l8 6V9z" fill="#865fc5" fillRule="evenodd" />;
}

const oldTasks: { label: string; icon: ReactNode; active?: boolean }[] = [
  {
    label: "NewDash - Power...",
    icon: (
      <>
        <path d="M25 18H11c1 5 7 5 9 2h5C21 31 4 28 4 16S22 2 25 14zM11 13h8c0-4-8-4-8 0z" fill="#6fcbf3" stroke="#2a8fd0" />
        <path d="M3 26C-3 17 14-1 27 2c3 2 1 5 0 6 0-9-16-1-20 10-2 4-2 8-4 8z" fill="#f5c63a" />
      </>
    ),
  },
  {
    label: "Debug",
    icon: (
      <>
        <path d="M2 1l10 2v24l-7 2-3-4z" fill="#f4e49a" />
        <path d="M8 4l14-1v22l-13 4z" fill="#ead779" stroke="#fff3bd" />
      </>
    ),
  },
  { label: "Visual Studio Inst...", icon: <VisualStudioIcon /> },
  {
    label: "Configure Test A...",
    icon: (
      <>
        <path d="M15 1l12 7v11l-12 11L4 19V8z" fill="#2fa35c" />
        <path d="M15 1l6 6-6 8-7-8z" fill="#8fe0ad" />
        <path d="M4 8l11 7v15L4 19z" fill="#46b872" />
        <path d="M1 9c3 9 18 12 28 5" fill="none" stroke="#b9b4e0" strokeWidth="2" />
      </>
    ),
  },
  {
    label: "Untitled - Power ...",
    active: true,
    icon: (
      <>
        <path d="M0 0h30v30H0z" fill="#f2c811" />
        <path d="M7 20c-1 0-2-1-2-2v-8c0-1 1-2 2-2h16c1 0 2 1 2 2v9" fill="none" stroke="#222" strokeWidth="2" />
        <path d="M11 23v-3M15 24v-7M19 24v-5M23 23V13" stroke="#222" strokeWidth="2" />
      </>
    ),
  },
];

function OldTask({ task }: { task: (typeof oldTasks)[number] }) {
  return (
    <button className={`flex h-[38px] w-[159px] shrink-0 items-center gap-[6px] border pl-[9px] text-[11px] whitespace-nowrap text-white ${task.active ? "border-[#f3e7d3] bg-[#c9a982]" : "border-[#d9b182] bg-[#c29256]"}`}>
      <svg width="30" height="30" viewBox="0 0 30 30" className="shrink-0">{task.icon}</svg>
      {task.label}
    </button>
  );
}

function Windows8Bar() {
  return (
    <div className="flex h-10 flex-1 items-center bg-[linear-gradient(110deg,#b07c2a_0%,#b8883f_55%,#c3a068_56%,#cfb07c_96%,#c9993b_97%)]">
      <button aria-label="Start" className="flex w-[51px] items-center justify-center"><StartIcon size={26} /></button>
      <div className="flex gap-[3px]">
        <OldTask task={oldTasks[0]} />
        <OldTask task={oldTasks[1]} />
        <button aria-label="Store" className="flex w-[58px] items-center justify-center">
          <svg width="30" height="30" viewBox="0 0 30 30">
            <path d="M0 0h30v30H0z" fill="#0a8a0a" />
            <path d="M4 10h22l-2 16H6z" fill="#fff" />
            <path d="M10 10c0-7 10-7 10 0" fill="none" stroke="#fff" strokeWidth="2" />
            <path d="M10 14h4v4h-4zM15 14h5v4h-5zM10 19h4v4h-4zM15 19h5v4h-5z" fill="#0a8a0a" />
          </svg>
        </button>
        <OldTask task={oldTasks[2]} />
        <OldTask task={oldTasks[3]} />
        <OldTask task={oldTasks[4]} />
      </div>
      <div className="ml-auto flex items-center text-[11px] text-white">
        <svg width="88" height="18" viewBox="0 0 88 18" fill="none" stroke="#fff" strokeWidth="1.500">
          <path d="M1 11h9L5.500 6z" fill="#fff" stroke="none" />
          <path d="M24 1v15" stroke="#555" strokeWidth="2" />
          <path d="M26 3h8v8h-8z" stroke="#555" fill="#fff" strokeWidth="1" />
          <circle cx="34" cy="12" r="4.500" fill="#d22c2c" stroke="none" />
          <path d="M32 10l4 4M36 10l-4 4" />
          <path d="M52 3h10v8H52zM54 15h8M58 11v4M49 1v6M48 3h4" />
          <path d="M73 6h2l4-4v13l-4-4h-2zM81 6v6M84 4v10" />
        </svg>
        <div className="w-[84px] text-center leading-[17px]">
          <div>9:07 AM</div>
          <div>6/14/2018</div>
        </div>
      </div>
    </div>
  );
}

const newTasks: { name: string; open?: boolean; active?: boolean; icon: ReactNode }[] = [
  { name: "Start", icon: <path d="M7 8l7-1v8H7zM15 7l9-1v9h-9zM7 16h7v8l-7-1zM15 16h9v9l-9-1z" fill="#fff" /> },
  { name: "Cortana", icon: <circle cx="15" cy="15" r="6.500" fill="none" stroke="#fff" strokeWidth="2" /> },
  {
    name: "Task view",
    icon: <path d="M8 11h9v8H8zM7 8h11M7 22h11M21 7v3M21 12v4M21 18v5" fill="none" stroke="#fff" strokeWidth="1.500" />,
  },
  {
    name: "Edge",
    icon: <path d="M5 14C7 3 25 1 25 15v3H12c0 6 8 6 12 3v4C17 29 6 27 7 18c0-4 3-7 6-8-4 0-6 2-8 4zM12 14h8c0-5-7-5-8 0z" fill="#1381dc" />,
  },
  {
    name: "File Explorer",
    open: true,
    icon: (
      <>
        <path d="M5 6h8l2 2h11v16H5z" fill="#fbe08a" />
        <path d="M5 11h21v2H5z" fill="#e9bf52" />
        <path d="M8 17h15v7h-4v-3h-7v3H8z" fill="#45a6dc" />
      </>
    ),
  },
  {
    name: "Store",
    icon: (
      <>
        <path d="M4 9h22v17H4z" fill="#fff" />
        <path d="M11 9c0-7 8-7 8 0" fill="none" stroke="#fff" strokeWidth="1.500" />
        <path d="M10 12h4v4h-4z" fill="#e8542f" />
        <path d="M16 12h4v4h-4z" fill="#7cba2a" />
        <path d="M10 18h4v4h-4z" fill="#2f9de0" />
        <path d="M16 18h4v4h-4z" fill="#f5b921" />
      </>
    ),
  },
  {
    name: "Mail",
    icon: (
      <>
        <path d="M3 12l12-8 12 8v12H3z" fill="#fff" />
        <path d="M6 12h19l-6 5-3-1v4z" fill="#05080f" />
      </>
    ),
  },
  {
    name: "Visual Studio",
    open: true,
    icon: <path d="M3 11l2-1 5 4 8-7v16l-8-6-5 4-2-1zM18 3l8 3v18l-8 3-9-4 9 1z" fill="#8a63c8" />,
  },
  {
    name: "Skype",
    open: true,
    icon: (
      <>
        <circle cx="14" cy="14" r="10" fill="#1ba7e3" />
        <text x="14" y="20" textAnchor="middle" fontSize="16" fontWeight="700" fill="#fff">S</text>
        <circle cx="21" cy="22" r="5" fill="#5fa52b" />
        <path d="M19 22l2 2 3-4" stroke="#fff" fill="none" strokeWidth="1.500" />
      </>
    ),
  },
  {
    name: "Chrome",
    open: true,
    icon: (
      <>
        <circle cx="15" cy="15" r="10" fill="#dd4b3c" />
        <path d="M6 10l6 7 4 8A10 10 0 0 1 6 10z" fill="#2ea44f" />
        <path d="M15 10h9a10 10 0 0 1-9 15l5-8z" fill="#fbcb2d" />
        <circle cx="15" cy="15" r="5" fill="#fff" />
        <circle cx="15" cy="15" r="4" fill="#3b7de0" />
      </>
    ),
  },
  {
    name: "Command Prompt",
    open: true,
    icon: (
      <>
        <path d="M4.500 6.500h22v17h-22z" fill="#0a0a0a" stroke="#8a8a8a" />
        <path d="M4 6h23v3H4z" fill="#c6c6c6" />
        <path d="M7 11v3M9 11v3M12 11l2 3M16 14h4" stroke="#fff" />
      </>
    ),
  },
  {
    name: "Outlook",
    open: true,
    icon: (
      <>
        <path d="M15 7h11v13H15z" fill="#2a8dd4" stroke="#fff" />
        <path d="M3 6l13-2v21L3 22z" fill="#0f6fc0" />
        <text x="9" y="18" textAnchor="middle" fontSize="11" fontWeight="700" fill="#fff">O</text>
        <path d="M13 17h15v11H13z" fill="#f0b26a" />
        <path d="M13 17l7 6 8-6" fill="none" stroke="#fff" />
      </>
    ),
  },
  {
    name: "Remote Desktop",
    open: true,
    icon: (
      <>
        <path d="M5 5l15-1 3 14-14 1z" fill="#2f62d8" stroke="#c8d5f0" />
        <path d="M9 22l12-2 2 4-10 2z" fill="#d9d9d9" />
        <circle cx="22" cy="21" r="5" fill="#b8b8b8" stroke="#fff" />
      </>
    ),
  },
  {
    name: "Power BI Desktop",
    open: true,
    active: true,
    icon: (
      <>
        <path d="M4 3h23v24H4z" fill="#f2c811" />
        <path d="M9 18H8v-8h15v8" fill="none" stroke="#222" strokeWidth="1.500" />
        <path d="M11 21v-3M14 21v-5M17 21v-4M20 21v-8" stroke="#222" strokeWidth="2" />
      </>
    ),
  },
];

function Windows10Bar() {
  return (
    <div className="flex h-10 flex-1 items-center bg-[#05080f]">
      {newTasks.map((t) => (
        <button key={t.name} aria-label={t.name} className={`flex h-10 w-[49px] flex-col items-center justify-between pt-1 ${t.active ? "bg-[#3a4047]" : ""}`}>
          <svg width="30" height="30" viewBox="0 0 30 30">{t.icon}</svg>
          {t.open && <span className={`h-[2px] bg-[#76b9ed] ${t.active ? "w-[49px]" : "w-10"}`} />}
        </button>
      ))}
      <div className="ml-auto pr-[6px] text-center text-[11px] leading-[17px] text-white">
        <div>9:37 PM</div>
        <div>6/14/2018</div>
      </div>
    </div>
  );
}

export default function App() {
  return (
    <div className="flex min-h-screen font-['Open_Sans','Noto_Sans',sans-serif]">
      <div className="flex flex-1 flex-col">
        <PowerBIWindow live={false} user="VSEQA1" status="" />
        <div className="flex"><Windows8Bar /></div>
      </div>
      <div className="flex flex-1 flex-col">
        <PowerBIWindow live user="Koustav Das" status="Connected live to the Power BI dataset: Streaming150 in My workspace" />
        <div className="flex"><Windows10Bar /></div>
      </div>
    </div>
  );
}
